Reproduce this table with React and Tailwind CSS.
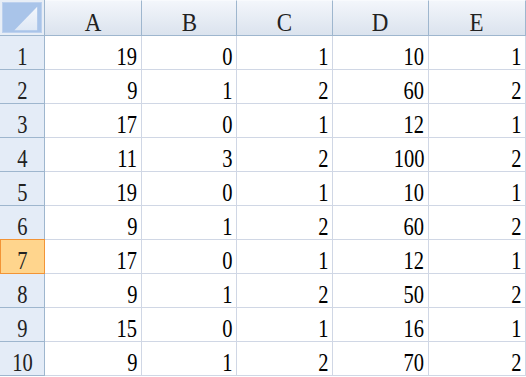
import React from 'react';

const columns = ['A', 'B', 'C', 'D', 'E'];

const rows = [
  [19, 0, 1, 10, 1],
  [9, 1, 2, 60, 2],
  [17, 0, 1, 12, 1],
  [11, 3, 2, 100, 2],
  [19, 0, 1, 10, 1],
  [9, 1, 2, 60, 2],
  [17, 0, 1, 12, 1],
  [9, 1, 2, 50, 2],
  [15, 0, 1, 16, 1],
  [9, 1, 2, 70, 2],
];

const selectedRow = 7;

function CornerCell() {
  return (
    <div className="border-r border-b border-[#9eb6ce] bg-[#e8eef6] p-[2px]">
      <div className="h-full w-full bg-[#a9c4e9] border border-[#bdd1ee]">
        <svg width="100%" height="100%" viewBox="0 0 40 31" preserveAspectRatio="none">
          <defs>
            <linearGradient id="tri" x1="0" y1="0" x2="0" y2="1">
              <stop offset="0" stopColor="#f4f7fc" />
              <stop offset="1" stopColor="#dfe8f5" />
            </linearGradient>
          </defs>
          <polygon points="36,4 36,29 12,29" fill="url(#tri)" />
        </svg>
      </div>
    </div>
  );
}

function ColumnHeader({ label }) {
  return (
    <div className="flex items-end justify-center border-r border-b border-t border-t-[#f8fafd] border-[#9eb6ce] bg-gradient-to-b from-[#f3f6fb] to-[#dbe3ee] text-[25px] leading-none text-[#222] font-['Liberation_Serif',serif]">
      <span className="inline-block scale-x-[0.92] origin-center">{label}</span>
    </div>
  );
}

function RowHeader({ n }) {
  const selected = n === selectedRow;
  return (
    <div
      className={
        selected
          ? 'flex items-end justify-center border-r border-b border-l border-[#f29436] bg-[#ffd58d] text-[25px] leading-none text-[#222] font-[\'Liberation_Serif\',serif] shadow-[0_-1px_0_#f29436]'
          : 'flex items-end justify-center border-r border-b border-[#9eb6ce] bg-[#e4ecf7] text-[25px] leading-none text-[#222] font-[\'Liberation_Serif\',serif]'
      }
    >
      <span className="inline-block scale-x-[0.82] origin-center">{n}</span>
    </div>
  );
}

function Cell({ value }) {
  return (
    <div className="flex items-end justify-end pr-[4px] border-r border-b border-[#d0d7e5] bg-white text-[25px] leading-none text-black font-['Liberation_Serif',serif]">
      <span className="inline-block scale-x-[0.82] origin-right">{value}</span>
    </div>
  );
}

export default function App() {
  return (
    <div className="w-[526px] h-[377px] bg-white overflow-hidden">
      <div className="grid grid-cols-[45px_97px_95px_96px_96px_97px] grid-rows-[36px_repeat(10,34px)]">
        <CornerCell />
        {columns.map((c) => (
          <ColumnHeader key={c} label={c} />
        ))}
        {rows.map((r, i) => (
          <React.Fragment key={i}>
            <RowHeader n={i + 1} />
            {r.map((v, j) => (
              <Cell key={j} value={v} />
            ))}
          </React.Fragment>
        ))}
      </div>
    </div>
  );
}
